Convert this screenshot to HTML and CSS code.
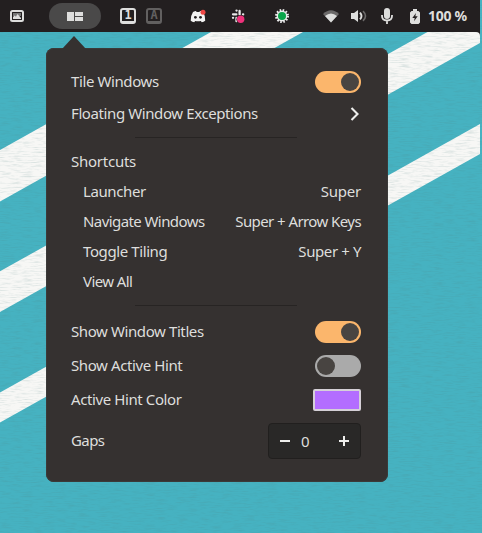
FILE: index.html
```
<!DOCTYPE html>
<html lang="en">
<head>
<meta charset="utf-8">
<title>Tile Windows</title>
<link rel="stylesheet" href="styles.css">
</head>
<body>
<svg class="wallpaper" width="482" height="533" viewBox="0 0 482 533" aria-hidden="true">
  <filter id="weave" x="0" y="0" width="100%" height="100%"><feTurbulence type="fractalNoise" baseFrequency=".09 .8" numOctaves="3" seed="4"/><feColorMatrix values="0 0 0 0 .08  0 0 0 0 .22  0 0 0 0 .22  2 0 0 0 -.9"/></filter>
  <rect width="482" height="533" fill="#46b2c1"/>
  <g fill="#f7f7f5">
    <path d="M0 150 211 32H303L0 201.6Z"/>
    <path d="M0 271.3 427.5 32H480V43L0 312Z"/>
    <path d="M0 392.6 480 124V154L0 422.5Z"/>
  </g>
  <rect width="482" height="533" filter="url(#weave)" opacity=".2"/>
  <path d="M476 32h4v4q0-4-4-4z" fill="#231f20"/>
</svg>
<header class="topbar">
  <svg class="ic-display" width="14" height="12" viewBox="0 0 14 12"><rect x="1" y="1" width="12" height="10" rx="1.5" fill="none" stroke="#dededd" stroke-width="2"/><path d="M3 3h8v3H3z" fill="#777"/><path d="M3 9V7l1.5-1.5L6 6.5 7.5 4 11 8v1z" fill="#dededd"/></svg>
  <div class="tiling"><svg width="16" height="9" viewBox="0 0 16 9" fill="#dededd"><path d="M0 0h7v9H0zM8 0h8v4H8zM8 5h8v4H8z"/></svg></div>
  <div class="key key-one">1</div>
  <div class="key key-caps">A</div>
  <svg class="ic-discord" width="16" height="14" viewBox="0 0 16 14"><path d="M3 3Q5 2 6 2l.6 1h2.8l.6-1q2 .2 3.2 1Q15.5 7 15.2 11.7 13.6 13 11.8 13.2L10.8 12Q8 12.6 5.2 12l-1 1.2Q2.3 13 .7 11.7.4 7 3 3Z" fill="#f2f2f2"/><circle cx="5.4" cy="8.3" r="1.4" fill="#231f20"/><circle cx="10.5" cy="8.3" r="1.4" fill="#231f20"/><circle cx="13" cy="3.3" r="2.5" fill="#ef4644"/></svg>
  <svg class="ic-slack" width="15" height="15" viewBox="0 0 15 15"><g stroke="#e8e8e7" stroke-width="2.3" stroke-linecap="round" fill="none"><path d="M5.5 1.6h.1M2 5.3h3.4M8.6 2v3.4M12 5.4h.2M2 8.8h.1M5.5 9v3.2"/></g><circle cx="9.7" cy="10.3" r="4.3" fill="#231f20"/><circle cx="9.7" cy="10.3" r="3.7" fill="#f0317b"/></svg>
  <svg class="ic-status" width="14" height="14" viewBox="0 0 14 14"><circle cx="7" cy="7" r="5.4" fill="#eee"/><circle cx="7" cy="7" r="6" fill="none" stroke="#eee" stroke-width="2" stroke-dasharray="1.57 1.57"/><circle cx="7" cy="7" r="4" fill="#0aa54a"/></svg>
  <svg class="ic-wifi" width="16" height="13" viewBox="0 0 16 13"><path d="M0 4Q8-3.5 16 4L8 12.5Z" fill="#6b6969"/><path d="M2 6Q8 1 14 6L8 12.5Z" fill="#dededd"/></svg>
  <svg class="ic-volume" width="16" height="12" viewBox="0 0 16 12"><path d="M0 3h3L7 0v12L3 9H0z" fill="#dededd"/><path d="M9 2.6Q12 6 9 9.4" fill="none" stroke="#dededd" stroke-width="1.9"/><path d="M12 1.2Q17 6 12 10.8" fill="none" stroke="#6b6969" stroke-width="1.6"/></svg>
  <svg class="ic-mic" width="12" height="16" viewBox="0 0 12 16"><rect x="3" y="0" width="6" height="11" rx="3" fill="#dededd"/><path d="M1 7v1q0 4.5 5 4.5T11 8V7M6 12v4" fill="none" stroke="#dededd" stroke-width="1.8"/></svg>
  <svg class="ic-battery" width="10" height="15" viewBox="0 0 10 15"><path d="M3 0h4v2h1.5L10 3.5V13.5L8.5 15h-7L0 13.5v-10L1.5 2H3z" fill="#dededd"/><path d="M6 4 2.3 9h2.4L4 12.3 7.7 7.3H5.3z" fill="#231f20"/></svg>
  <span class="percent">100 %</span>
</header>
<main class="popup">
  <div class="row first"><span class="label">Tile Windows</span><i class="switch on"></i></div>
  <div class="row exceptions"><span class="label">Floating Window Exceptions</span><svg class="chevron" width="10" height="14" viewBox="0 0 10 14"><path d="m1.5 1 6 6-6 6" fill="none" stroke="#eeeeec" stroke-width="2.1"/></svg></div>
  <hr>
  <div class="row heading"><span class="label loose">Shortcuts</span></div>
  <div class="row sub"><span class="label">Launcher</span><span class="label loose">Super</span></div>
  <div class="row sub"><span class="label tight">Navigate Windows</span><span class="label tight">Super + Arrow Keys</span></div>
  <div class="row sub"><span class="label">Toggle Tiling</span><span class="label">Super + Y</span></div>
  <div class="row sub"><span class="label tight">View All</span></div>
  <hr class="second">
  <div class="row option titles"><span class="label">Show Window Titles</span><i class="switch on"></i></div>
  <div class="row option"><span class="label">Show Active Hint</span><i class="switch"></i></div>
  <div class="row option"><span class="label">Active Hint Color</span><i class="swatch"></i></div>
  <div class="row gaps"><span class="label tight">Gaps</span>
    <div class="stepper"><svg width="10" height="10" viewBox="0 0 10 10"><path d="M0 4h10v2H0z" fill="#eeeeec"/></svg><span class="value">0</span><svg width="10" height="10" viewBox="0 0 10 10"><path d="M0 4h4V0h2v4h4v2H6v4H4V6H0z" fill="#eeeeec"/></svg></div>
  </div>
</main>
</body>
</html>
```
FILE: styles.css
```
* { box-sizing: border-box; }
html, body { margin: 0; width: 482px; height: 533px; overflow: hidden; }
body { background: #46b2c1; font: 15px/20px "Noto Sans", "Open Sans", sans-serif; color: #dededc; }
.wallpaper { position: absolute; inset: 0; z-index: -1; }
svg { display: block; flex: none; }

.topbar { display: flex; align-items: center; width: 480px; height: 32px; background: #231f20; padding-left: 10px; }
.tiling { display: flex; align-items: center; justify-content: center; width: 52px; height: 26px; margin-left: 25px; border-radius: 13px; background: #4a4949; }
.key { width: 16px; height: 16px; border: 2px solid #dededd; border-bottom-width: 3px; border-radius: 3px; color: #dededd; font: bold 12px/11px "DejaVu Sans Mono", monospace; text-align: center; }
.key-one { margin-left: 19px; }
.key-caps { margin-left: 10px; border-color: #626060; color: #626060; }
.ic-discord { margin-left: 28px; }
.ic-slack { margin-left: 25px; }
.ic-status { margin-left: 29px; }
.ic-wifi { margin-left: 34px; }
.ic-volume { margin-left: 12px; }
.ic-mic { margin-left: 14px; }
.ic-battery { margin-left: 17px; }
.percent { margin-left: 8px; font-size: 14px; font-weight: 700; white-space: pre; letter-spacing: -.3px; }

.popup { position: relative; width: 342px; height: 434px; margin: 16px 0 0 46px; padding: 18px 27px 0 25px; border-radius: 8px; background: #353130; box-shadow: inset 0 0 0 1px #3b3a39; }
.popup::before { content: ""; position: absolute; left: 16px; top: -12px; width: 24px; height: 13px; background: #353130; clip-path: polygon(50% 0, 100% 100%, 0 100%); }
.row { display: flex; align-items: center; justify-content: space-between; height: 30px; font-size: 15px; white-space: nowrap; }
.label { padding-bottom: 2px; letter-spacing: -.4px; }
.label.loose { letter-spacing: -.25px; }
.label.tight { letter-spacing: -.58px; }
.first { height: 32px; }
.exceptions { height: 32px; }
.chevron { margin-right: 1px; }
hr { width: 162px; height: 1px; margin: 7px 0 9px 64px; border: 0; background: #272423; }
.sub { padding-left: 12px; }
hr.second { margin: 8px 0 9px 64px; }
.option { height: 34px; }
.switch { width: 46px; height: 22px; padding: 2px; border-radius: 11px; background: #aaaaaa; }
.switch::before { content: ""; display: block; width: 18px; height: 18px; border-radius: 50%; background: #484441; }
.switch.on { background: #fbb66c; }
.switch.on::before { margin-left: 24px; }
.swatch { width: 48px; height: 22px; border: 2px solid #d5d0d7; border-radius: 2px; background: #b36dff; }
.gaps { height: 48px; }
.stepper { display: flex; align-items: center; width: 93px; height: 36px; padding: 0 11px; border: 1px solid #211f1e; border-radius: 4px; background: #292827; }
.value { flex: 1; padding: 0 0 1px 11px; }
```
